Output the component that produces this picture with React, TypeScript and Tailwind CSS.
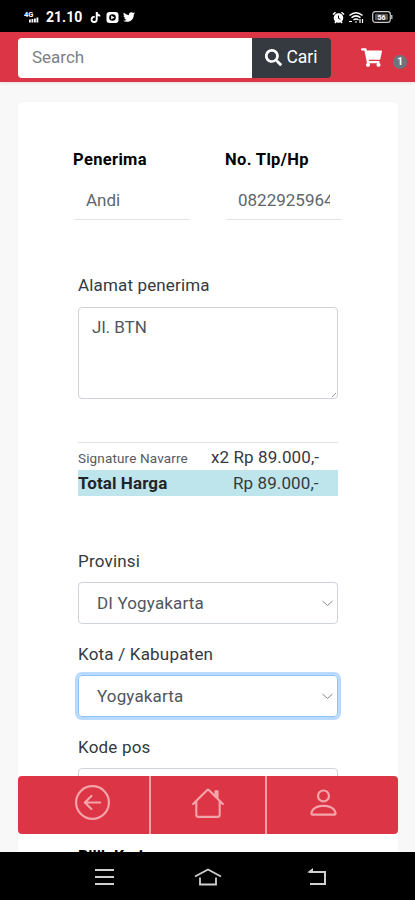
import { BsArrowLeftCircle, BsHouse, BsPerson } from 'react-icons/bs';
import { FaSearch, FaShoppingCart, FaTwitter, FaTiktok } from 'react-icons/fa';

function StatusBar() {
  return (
    <div className="h-8 shrink-0 bg-black text-white flex items-center justify-between pl-6 pr-[22px] pt-[2px]">
      <div className="flex items-center">
        <svg width="16" height="12" viewBox="0 0 16 12" fill="currentColor">
          <text x="0" y="6" fontSize="7.5" fontWeight="700" fontFamily="Roboto, sans-serif">4G</text>
          <path d="M5 8.500h1.800v3H5zM7.500 8h1.800v3.500H7.500zM10 7.500h1.800v4H10zM12.500 6.500h1.800v5h-1.800z" />
        </svg>
        <span className="ml-[6px] text-[14px] font-bold leading-none">21.10</span>
        <FaTiktok className="ml-[8px] size-[11px]" />
        <svg className="ml-[5px]" width="13" height="11" viewBox="0 0 13 11">
          <rect x="0.500" width="12" height="11" rx="3" fill="white" />
          <circle cx="6.500" cy="5.500" r="3.300" fill="black" />
          <path d="M5.200 3.500l3.300 2-3.300 2z" fill="white" />
        </svg>
        <FaTwitter className="ml-[4px] size-[12px]" />
      </div>
      <div className="flex items-center">
        <svg width="13" height="13" viewBox="0 0 13 13">
          <circle cx="6.500" cy="7" r="4.800" fill="white" />
          <path d="M1 3.500L3.500 1.200M12 3.500L9.500 1.200M3 12l1-1.500M10 12l-1-1.500" stroke="white" strokeWidth="1.500" />
          <path d="M6.500 4.500V7.300l1.800 1" fill="none" stroke="black" />
        </svg>
        <svg className="ml-[3px]" width="16" height="13" viewBox="0 0 16 13" fill="none" stroke="white" strokeWidth="1.500">
          <path d="M1.500 4.500Q8-1 14.500 4.500M3.500 6.800Q8 3 12.500 6.800M5.500 9Q8 7 10.500 9" />
          <path d="M7 11h2M1 10.500h3M12 8v4M14.500 8v4" strokeWidth="1.200" />
        </svg>
        <svg className="ml-2" width="21" height="12" viewBox="0 0 21 12">
          <rect x="0.700" y="0.700" width="17.600" height="10.600" rx="2.500" fill="none" stroke="#ccc" strokeWidth="1.200" />
          <rect x="3" y="2.800" width="13" height="6.400" rx="1" fill="#555" />
          <text x="5.500" y="8.500" fontSize="7" fontWeight="700" fill="white" fontFamily="Roboto, sans-serif">56</text>
          <path d="M19.800 4v4" stroke="#ccc" strokeWidth="1.300" />
        </svg>
      </div>
    </div>
  );
}

function Navbar() {
  return (
    <header className="h-[50px] shrink-0 bg-[#dc3545] flex items-center pl-[18px] pt-px relative z-10 shadow-[0_1px_3px_rgba(0,0,0,0.1)]">
      <div className="flex h-10 w-[313px] rounded overflow-hidden">
        <div className="w-[234px] bg-white pl-[14px] pt-px flex items-center text-[17px] text-[#7b8187]">Search</div>
        <button className="flex-1 bg-[#343a40] text-white flex items-center justify-center text-[17.5px]">
          <FaSearch className="mr-1 size-[17px]" />
          Cari
        </button>
      </div>
      <FaShoppingCart className="ml-[30px] size-[21px] text-white" />
      <span className="ml-[11px] mt-2 size-[14px] rounded-full bg-[#6c757d] text-white text-[10px] font-bold flex items-center justify-center">1</span>
    </header>
  );
}

function Field({ label, value }: { label: string; value: string }) {
  return (
    <div className="w-[116px]">
      <p className="text-[16.5px] leading-6 font-bold tracking-[0.35px] text-black -ml-px">{label}</p>
      <div className="mt-[8px] h-[40px] border-b border-[#e3e5e8] px-3 pt-[2px] flex items-center">
        <span className="flex-1 overflow-hidden whitespace-nowrap text-[17px] text-[#5f656b]">{value}</span>
      </div>
    </div>
  );
}

function Select({ label, value, focused }: { label: string; value: string; focused?: boolean }) {
  return (
    <div>
      <p className="h-[33px] leading-6 text-[17px] tracking-[0.2px] text-[#343a40]">{label}</p>
      <div
        className={
          focused
            ? 'h-[42px] rounded border border-[#8fc4f5] shadow-[0_0_0_3px_#b8daff] px-[18px] flex items-center'
            : 'h-[42px] rounded border border-[#ced4da] px-[18px] flex items-center'
        }
      >
        <span className="flex-1 pt-px text-[17px] tracking-[0.15px] text-[#50565c]">{value}</span>
        <svg className="-mr-[14px]" width="11" height="7" viewBox="0 0 11 7" fill="none" stroke="#858585">
          <path d="M0.500 1l5 4.500 5-4.500" />
        </svg>
      </div>
    </div>
  );
}

function BottomNav() {
  return (
    <nav className="absolute left-[18px] right-[17px] top-[694px] h-[58px] rounded bg-[#dc3545] text-[#f3a5aa] flex overflow-hidden">
      <a className="w-[133px] border-r-2 border-[#f0a0a6] flex justify-center pl-[18px] pt-[9px]">
        <BsArrowLeftCircle className="size-[35px]" />
      </a>
      <a className="w-[116px] border-r-2 border-[#f0a0a6] flex justify-center pt-[10px]">
        <BsHouse className="size-[34px]" />
      </a>
      <a className="flex-1 flex justify-center pr-[18px] pt-[9px]">
        <BsPerson className="size-[35px]" />
      </a>
    </nav>
  );
}

function SystemNav() {
  return (
    <div className="h-12 shrink-0 bg-black flex items-center pl-[94px] pt-px text-[#d0d0d0]">
      <svg width="21" height="18" viewBox="0 0 21 18" fill="none" stroke="currentColor" strokeWidth="2">
        <path d="M1 2h19M1 9h19M1 16h19" />
      </svg>
      <svg className="ml-[79px]" width="28" height="18" viewBox="0 0 28 18" fill="none" stroke="currentColor" strokeWidth="1.800">
        <path d="M1 8.500L14 1.500l13 7M6 9.500V16.500h16V9.500" />
      </svg>
      <svg className="ml-[84px]" width="22" height="18" viewBox="0 0 22 18" fill="none" stroke="currentColor" strokeWidth="2">
        <path d="M3 4h16v12H4" />
        <path d="M1 4.500L7 0v4.500z" fill="currentColor" stroke="none" />
      </svg>
    </div>
  );
}

export default function App() {
  return (
    <div className="w-full h-[900px] flex flex-col overflow-hidden bg-[#f8f8f8] font-['Roboto',sans-serif]">
      <StatusBar />
      <Navbar />
      <main className="relative flex-1 min-h-0 overflow-hidden pt-5 pl-[18px] pr-[17px]">
        <div className="bg-white rounded-sm h-[800px] pt-[46px] shadow-[0_0_3px_rgba(0,0,0,0.04)]">
          <div className="flex gap-[36px] pl-14">
            <Field label="Penerima" value="Andi" />
            <Field label="No. Tlp/Hp" value="082292596412" />
          </div>

          <div className="ml-[60px] w-[260px] mt-[53px]">
            <p className="leading-6 text-[17px] tracking-[0.15px] text-[#343a40]">Alamat penerima</p>
            <div className="relative mt-[10px] h-[92px] rounded border border-[#ced4da] px-[13px] py-[7px] leading-6 text-[17px] text-[#50565c]">
              Jl. BTN
              <svg className="absolute right-px bottom-px" width="4" height="4" stroke="#999">
                <path d="M0 4l4-4" />
              </svg>
            </div>

            <div className="mt-[43px] border-t border-[#dee2e6] h-[28px] pt-[3px] flex items-center text-[#343a40]">
              <span className="w-[133px] text-[13.5px] tracking-[0.15px] text-[#555b61]">Signature Navarre</span>
              <span className="text-[17px] tracking-[0.1px]">x2 Rp 89.000,-</span>
            </div>
            <div className="h-[26px] pt-[2px] bg-[#bee5eb] flex items-center text-[#212529]">
              <span className="w-[155px] text-[17px] font-bold tracking-[0.1px]">Total Harga</span>
              <span className="text-[17px] tracking-[0.1px] text-[#343a40]">Rp 89.000,-</span>
            </div>

            <div className="mt-[53px] flex flex-col gap-[18px]">
              <Select label="Provinsi" value="DI Yogyakarta" />
              <Select label="Kota / Kabupaten" value="Yogyakarta" focused />
              <Select label="Kode pos" value="" />
            </div>
            <p className="mt-[35px] leading-6 text-[16px] font-bold text-black">Pilih Kurir</p>
          </div>
        </div>
        <BottomNav />
      </main>
      <SystemNav />
    </div>
  );
}
